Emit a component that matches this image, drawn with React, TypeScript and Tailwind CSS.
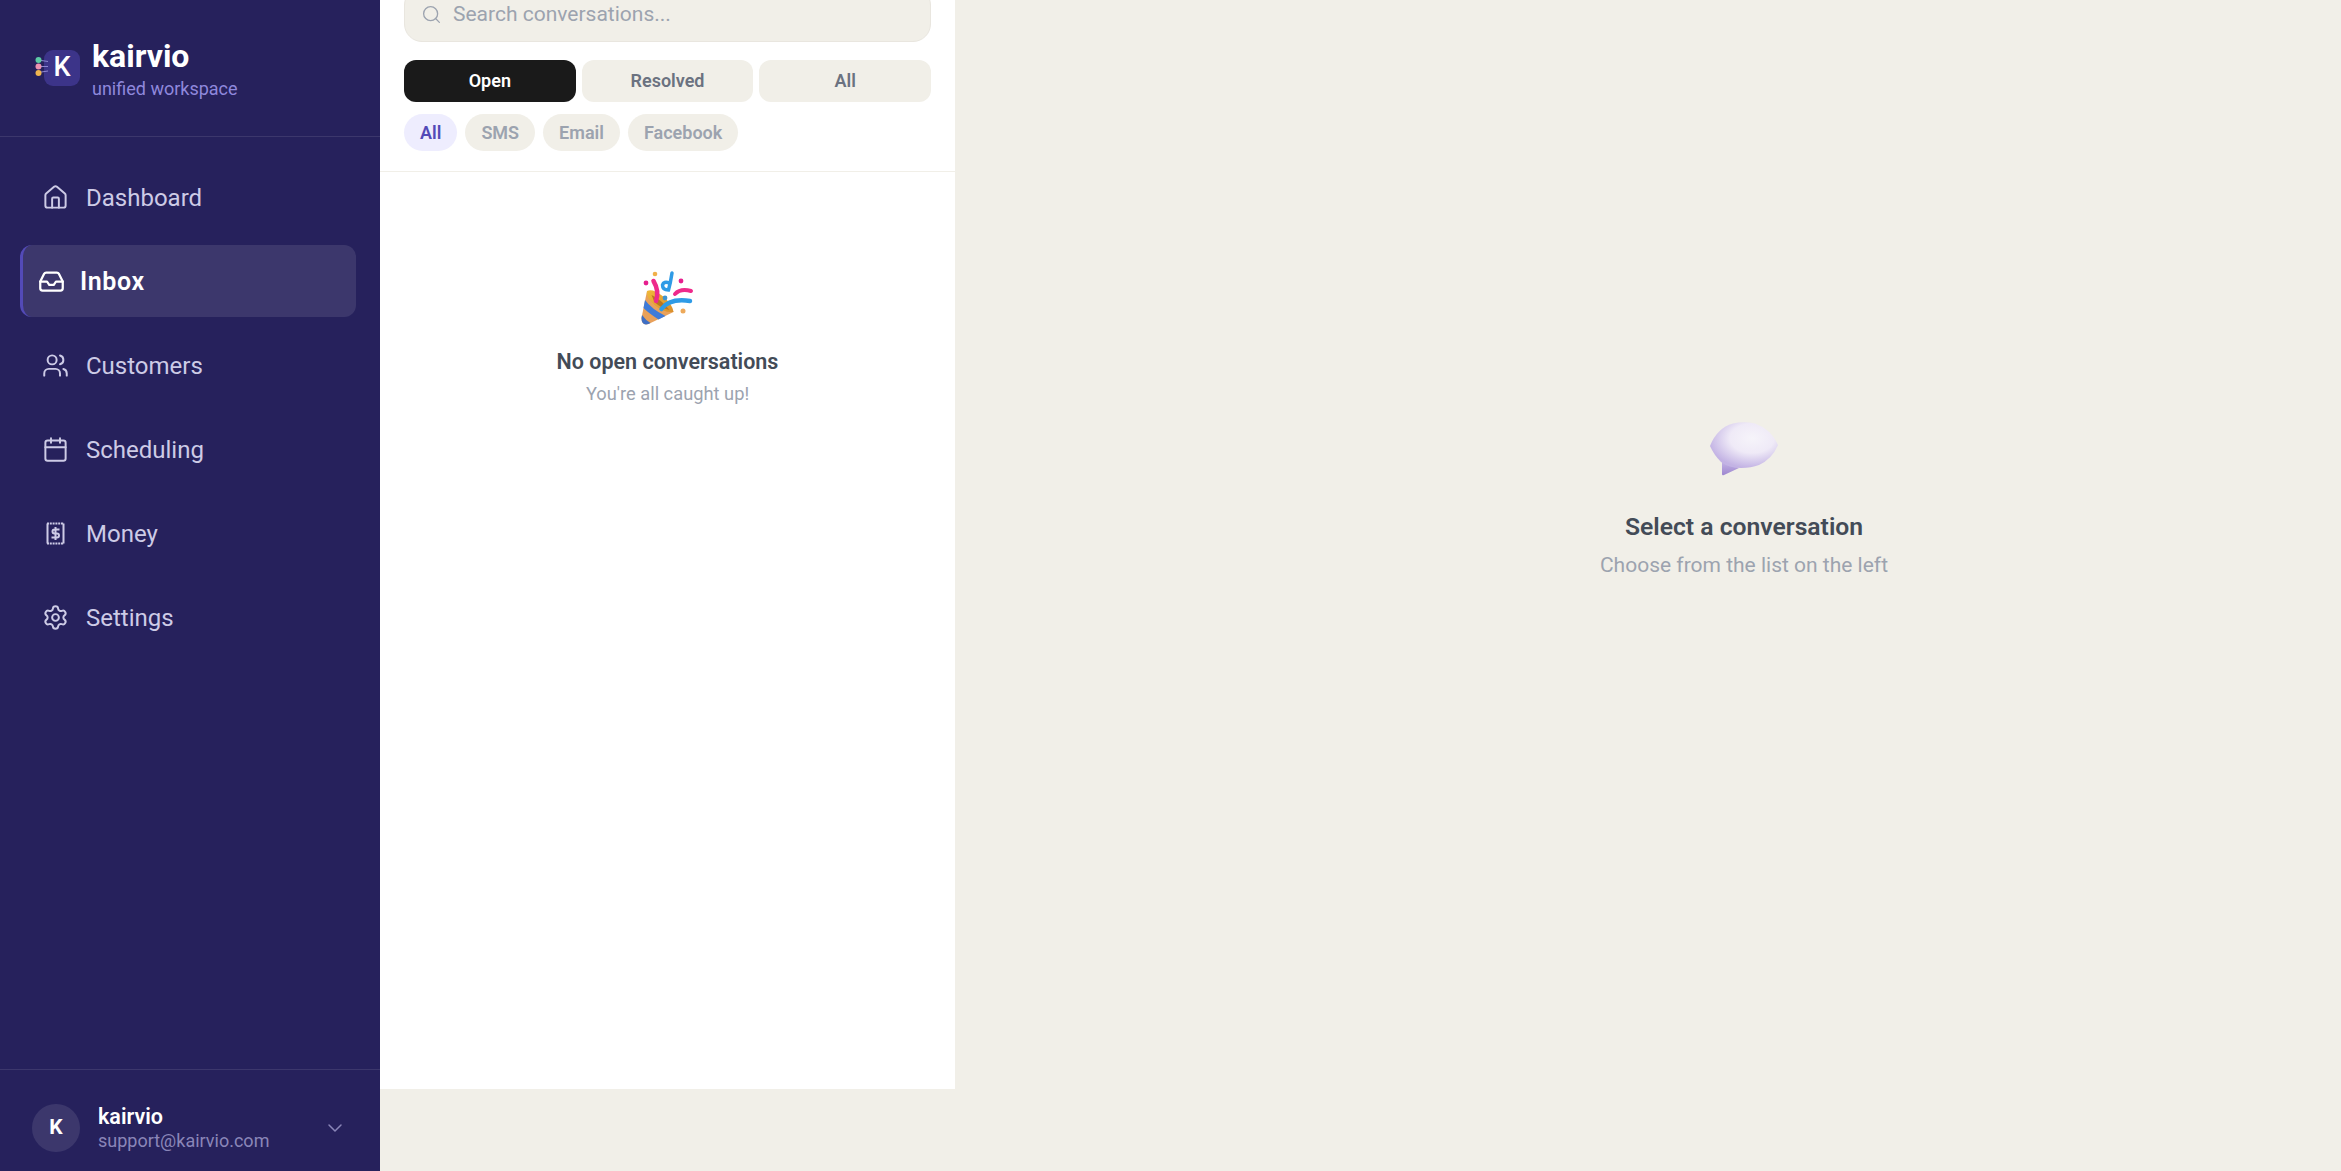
import { Calendar, ChevronDown, House, Inbox, Search, Settings, Users } from 'lucide-react';

const navItems = [
  { label: 'Dashboard', icon: House },
  { label: 'Inbox', icon: Inbox, active: true },
  { label: 'Customers', icon: Users },
  { label: 'Scheduling', icon: Calendar },
  { label: 'Money', icon: MoneyIcon },
  { label: 'Settings', icon: Settings },
];

function MoneyIcon({ className }: { className?: string }) {
  return (
    <svg viewBox="0 0 27 27" fill="none" stroke="currentColor" strokeWidth="2" className={className}>
      <path d="M5.500 3.500v20M21.500 3.500v20" />
      <path d="M5 3.500h17M5 23.500h17" strokeDasharray="2 0.800" />
      <path d="M17.500 9.500h-5a2 2 0 0 0 0 4h2.500a2 2 0 0 1 0 4H9.500M13.500 7v13" />
    </svg>
  );
}

function LogoMark() {
  return (
    <div className="relative mb-[1px] w-[36px] h-[36px] rounded-[9px] bg-[#3C3489] flex items-center justify-center text-white text-[27px] font-medium leading-none">
      K
      <svg viewBox="0 0 16 20" className="absolute left-[-9px] top-[6px] w-[16px] h-[20px]">
        <path d="M3 4l10 1.500M3 10.500h10M3 16.500l10-1.500" stroke="#8d87d0" strokeWidth="1" />
        <circle cx="3.500" cy="4" r="3" fill="#5DCAA5" />
        <circle cx="3.500" cy="10.500" r="3" fill="#ED93B1" />
        <circle cx="3.500" cy="17" r="3" fill="#EFB54F" />
      </svg>
    </div>
  );
}

function PartyPopper() {
  return (
    <svg viewBox="1.500 0 56 58" className="w-[56px] h-[58px]">
      <defs>
        <linearGradient id="popperRim" x1="0" y1="0" x2="1" y2="1">
          <stop offset="0" stopColor="#f0b93a" />
          <stop offset="1" stopColor="#d98f2b" />
        </linearGradient>
      </defs>
      {/* cone */}
      <path d="M8.500 20 L3 47 Q3 55 10 53 L35 41 Q30 26 8.500 20z" fill="#e9a15a" />
      <path d="M6.500 29 Q13 38 27 45 L20 48.500 Q10 42 5 37z" fill="#3f7bd8" />
      <path d="M3.500 44 Q7 49 12 52 L10 53 Q3 55 3 47z" fill="#3f6fc4" />
      <path d="M8.500 20 Q14 17 24 25 Q34 33 35 41 Q25 42 16 34 Q7 26 8.500 20z" fill="url(#popperRim)" />
      <path d="M13 24 Q22 28 31 39 Q22 37 16 31z" fill="#b9761f" />
      {/* streamers */}
      <path d="M17.500 30 Q21 20 15 10" stroke="#ee2a8b" strokeWidth="4.500" fill="none" strokeLinecap="round" />
      <path d="M23 38 Q31 27 51.500 30" stroke="#2f9be6" strokeWidth="4.500" fill="none" strokeLinecap="round" />
      <path d="M36.500 23 Q42 17 52.500 20" stroke="#ee2a8b" strokeWidth="4" fill="none" strokeLinecap="round" />
      <path d="M33.500 2 Q32 12 30 19 Q24 19 24 14 Q25 10 31 12" stroke="#2f9be6" strokeWidth="3.500" fill="none" strokeLinecap="round" />
      {/* dots */}
      <circle cx="16.500" cy="3" r="2.300" fill="#f0b04a" />
      <circle cx="7.500" cy="12" r="2.400" fill="#e61f8e" />
      <circle cx="42.500" cy="10" r="2.400" fill="#e61f8e" />
      <circle cx="26.500" cy="27" r="2.400" fill="#3f94d0" />
      <circle cx="44.500" cy="40" r="2.500" fill="#eda95a" />
    </svg>
  );
}

function SpeechBubble() {
  return (
    <svg viewBox="0 0 70 57" className="w-[70px] h-[57px]">
      <defs>
        <radialGradient id="bubbleFill" cx="0.62" cy="0.35" r="0.65">
          <stop offset="0" stopColor="#f6f4fa" />
          <stop offset="0.5" stopColor="#efeaf7" />
          <stop offset="1" stopColor="#c3b3e4" />
        </radialGradient>
        <linearGradient id="bubbleTail" x1="0" y1="0" x2="0" y2="1">
          <stop offset="0" stopColor="#c6b6e6" />
          <stop offset="1" stopColor="#9d86cf" />
        </linearGradient>
      </defs>
      <path d="M13 40 L13 53 Q13 55 15 54 L30 47z" fill="url(#bubbleTail)" />
      <path d="M1 25 Q8 7 24 2.500 Q35 0 46 2.500 Q62 8 69 24 Q63 38 50 44 Q42 47 32 47 Q20 47 12 41 Q5 34 1 25z" fill="url(#bubbleFill)" />
    </svg>
  );
}

export default function App() {
  return (
    <div className="flex h-[1171px] overflow-hidden bg-[#F1EFE8] font-['Roboto',sans-serif]">
      {/* Sidebar */}
      <aside className="flex flex-col w-[380px] shrink-0 bg-[#26215C]">
        <div className="flex items-center h-[137px] pl-[44px] gap-[12px] border-b border-white/10">
          <LogoMark />
          <div className="mt-[3px]">
            <div className="text-[32px] leading-[36px] font-bold text-white">kairvio</div>
            <div className="text-[18px] leading-[24px] mt-[3px] text-[#8f88dc]">unified workspace</div>
          </div>
        </div>

        <nav className="flex flex-col gap-[12px] pl-[20px] pr-[24px] pt-[24px] flex-1">
          {navItems.map((item) => (
            <div
              key={item.label}
              className={
                item.active
                  ? 'flex items-center h-[72px] gap-[15px] pl-[15px] rounded-[12px] border-l-[3px] border-[#534AB7] bg-white/10 text-white font-semibold text-[25px] tracking-[0.6px]'
                  : 'flex items-center h-[72px] gap-[17px] pl-[22px] text-[#cdcbe6] text-[24px]'
              }
            >
              <item.icon className="w-[27px] h-[27px]" strokeWidth={item.active ? 2 : 1.75} />
              <span className="mt-[2px]">{item.label}</span>
            </div>
          ))}
        </nav>

        <div className="flex items-center h-[102px] pl-[32px] pr-[33px] pt-[14px] border-t border-white/10">
          <div className="flex items-center justify-center w-[48px] h-[48px] rounded-full bg-white/10 text-white text-[21px] font-bold">
            K
          </div>
          <div className="ml-[18px] flex-1">
            <div className="text-[21.500px] leading-[26px] font-semibold text-white">kairvio</div>
            <div className="text-[18px] leading-[22px] text-[#8a86b8]">support@kairvio.com</div>
          </div>
          <ChevronDown className="w-[24px] h-[24px] text-[#8a86b8]" strokeWidth={1.5} />
        </div>
      </aside>

      {/* Conversation list */}
      <section className="flex flex-col w-[575px] h-[1089px] shrink-0 bg-white">
        <div className="px-[24px] pb-[20px] border-b border-[#F1EFE8]">
          <div className="flex items-center h-[55px] mt-[-13px] pl-[16px] gap-[11px] rounded-[18px] border border-[#e9e6df] bg-[#F1EFE8]">
            <Search className="w-[21px] h-[21px] text-[#9ca3af]" strokeWidth={1.5} />
            <span className="text-[21px] text-[#9ca3af]">Search conversations...</span>
          </div>
          <div className="flex gap-[6px] mt-[18px]">
            <div className="flex-1 flex items-center justify-center h-[42px] pb-[1px] rounded-[12px] bg-[#1a1a1a] text-white text-[18px] font-semibold">Open</div>
            <div className="flex-1 flex items-center justify-center h-[42px] pb-[1px] rounded-[12px] bg-[#F1EFE8] text-[#6b7280] text-[18px] font-semibold">Resolved</div>
            <div className="flex-1 flex items-center justify-center h-[42px] pb-[1px] rounded-[12px] bg-[#F1EFE8] text-[#6b7280] text-[18px] font-semibold">All</div>
          </div>
          <div className="flex gap-[8px] mt-[12px]">
            <div className="flex items-center h-[37px] px-[16px] pb-[1px] rounded-full bg-[#EEEDFE] text-[#534AB7] text-[18px] font-semibold">All</div>
            {['SMS', 'Email', 'Facebook'].map((c) => (
              <div key={c} className="flex items-center h-[37px] px-[16px] pb-[1px] rounded-full bg-[#F1EFE8] text-[#9ca3af] text-[18px] font-semibold">{c}</div>
            ))}
          </div>
        </div>
        <div className="flex flex-col items-center pt-[99px]">
          <PartyPopper />
          <div className="mt-[19px] text-[21.500px] leading-[28px] font-semibold text-[#434b57]">No open conversations</div>
          <div className="mt-[6px] text-[18.300px] leading-[24px] text-[#9ca3af]">You're all caught up!</div>
        </div>
      </section>

      {/* Empty thread: wider than the window in the reference, so its centre sits right of the visible middle */}
      <main className="w-[1578px] shrink-0 flex flex-col items-center pt-[421px]">
        <SpeechBubble />
        <div className="mt-[34px] text-[24.700px] leading-[30px] font-semibold text-[#434b57]">Select a conversation</div>
        <div className="mt-[9px] text-[21px] leading-[28px] text-[#9ca3af]">Choose from the list on the left</div>
      </main>
    </div>
  );
}
